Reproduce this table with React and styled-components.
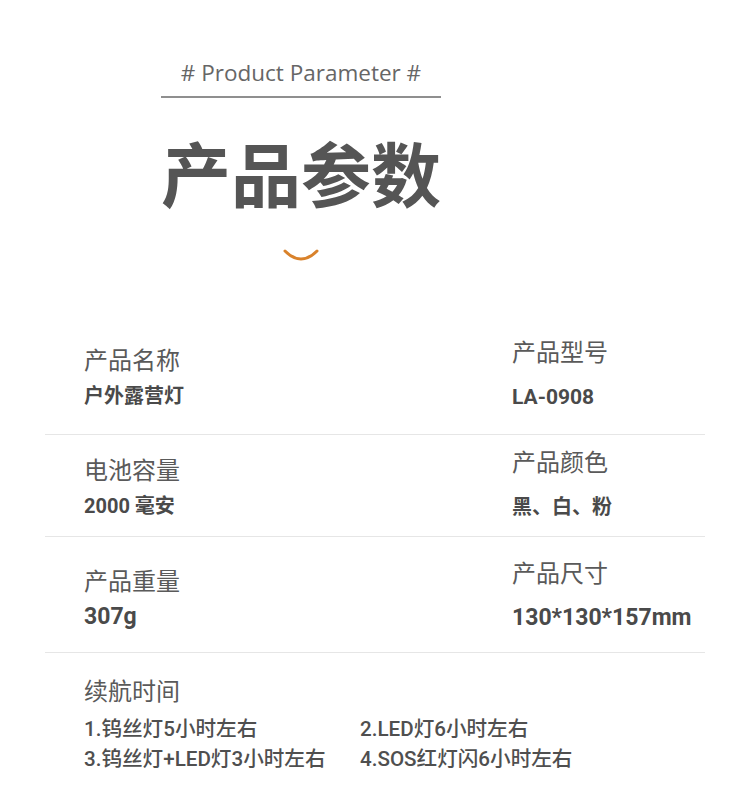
import React from "react";
import styled, { createGlobalStyle } from "styled-components";

const Global = createGlobalStyle`
  html, body { margin: 0; padding: 0; background: #ffffff; }
  body { font-family: "Noto Sans CJK SC", "Noto Sans", sans-serif; }
  * { box-sizing: border-box; }
`;

const Page = styled.div`
  width: 750px;
  min-height: 810px;
  background: #fff;
  overflow: hidden;
`;

const Header = styled.header`
  width: 280px;
  margin-left: 161px;
  padding-top: 58px;
  display: flex;
  flex-direction: column;
  align-items: center;
`;

const Subtitle = styled.div`
  font-family: "Open Sans", "Liberation Sans", sans-serif;
  font-size: 22.5px;
  line-height: 30px;
  color: #666;
  white-space: nowrap;
`;

const Rule = styled.div`
  width: 280px;
  height: 2px;
  background: #8f8f8f;
  margin-top: 8px;
`;

const Title = styled.h1`
  margin: 32px 0 0;
  font-family: "Noto Sans CJK SC", sans-serif;
  font-weight: 700;
  font-size: 70px;
  line-height: 84px;
  color: #555;
  white-space: nowrap;
`;

const Smile = styled.svg`
  display: block;
  margin-top: 35px;
`;

const Table = styled.section`
  margin: 75px 45px 0;
`;

const Row = styled.div`
  display: grid;
  grid-template-columns: 428px 1fr;
  padding: ${(p) => p.$top}px 0 ${(p) => p.$bottom}px 39px;
  border-bottom: ${(p) => (p.$last ? "none" : "1px solid #e6e6e6")};
`;

const Cell = styled.div`
  display: flex;
  flex-direction: column;
  gap: ${(p) => (p.$right ? 16 : 7)}px;
  padding-top: ${(p) => (p.$right ? 0 : 8)}px;
`;

const Label = styled.div`
  font-size: 24px;
  line-height: 30px;
  color: #5a5a5a;
  white-space: nowrap;
`;

const Value = styled.div`
  font-family: "Roboto", "Noto Sans CJK SC", sans-serif;
  font-weight: 700;
  font-size: ${(p) => p.$size || 20}px;
  line-height: 30px;
  color: #4a4a4a;
  white-space: nowrap;
`;

const Full = styled.div`
  display: flex;
  flex-direction: column;
  gap: 9px;
`;

const Lines = styled.div`
  display: grid;
  grid-template-columns: 276px auto;
`;

const Line = styled.div`
  font-family: "Roboto", "Noto Sans CJK SC", sans-serif;
  font-weight: 500;
  font-size: 20.6px;
  line-height: 30px;
  color: #4f4f4f;
  white-space: nowrap;
`;

const rows = [
  { top: 0, bottom: 22, l: ["产品名称", "户外露营灯", 20], r: ["产品型号", "LA-0908", 21] },
  { top: 11, bottom: 14, l: ["电池容量", "2000 毫安", 20], r: ["产品颜色", "黑、白、粉", 20] },
  { top: 20, bottom: 19, l: ["产品重量", "307g", 23], r: ["产品尺寸", "130*130*157mm", 23] },
];

const lines = [
  "1.钨丝灯5小时左右",
  "2.LED灯6小时左右",
  "3.钨丝灯+LED灯3小时左右",
  "4.SOS红灯闪6小时左右",
];

export default function App() {
  return (
    <Page>
      <Global />
      <Header>
        <Subtitle># Product Parameter #</Subtitle>
        <Rule />
        <Title>产品参数</Title>
        <Smile width="36" height="12" viewBox="0 0 36 12">
          <path d="M2 2 Q18 18 34 2" fill="none" stroke="#d9822b" strokeWidth="3" strokeLinecap="round" />
        </Smile>
      </Header>
      <Table>
        {rows.map((row, i) => (
          <Row key={i} $top={row.top} $bottom={row.bottom}>
            <Cell>
              <Label>{row.l[0]}</Label>
              <Value $size={row.l[2]}>{row.l[1]}</Value>
            </Cell>
            <Cell $right>
              <Label>{row.r[0]}</Label>
              <Value $size={row.r[2]}>{row.r[1]}</Value>
            </Cell>
          </Row>
        ))}
        <Row $top={22} $bottom={20} $last>
          <Full>
            <Label>续航时间</Label>
            <Lines>
              {lines.map((t) => (
                <Line key={t}>{t}</Line>
              ))}
            </Lines>
          </Full>
        </Row>
      </Table>
    </Page>
  );
}
